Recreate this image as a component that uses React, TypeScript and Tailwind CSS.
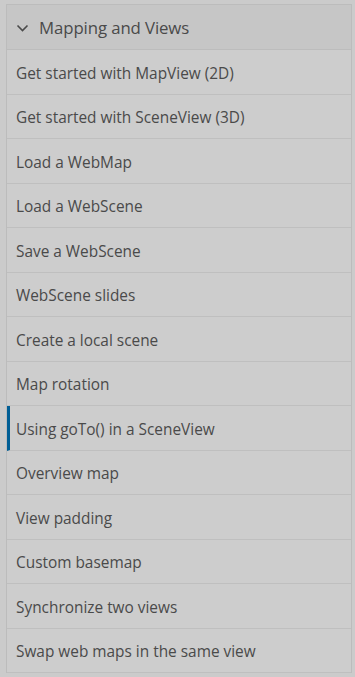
import React from "react";

const items = [
  "Get started with MapView (2D)",
  "Get started with SceneView (3D)",
  "Load a WebMap",
  "Load a WebScene",
  "Save a WebScene",
  "WebScene slides",
  "Create a local scene",
  "Map rotation",
  "Using goTo() in a SceneView",
  "Overview map",
  "View padding",
  "Custom basemap",
  "Synchronize two views",
  "Swap web maps in the same view",
];

export default function App() {
  return (
    <div
      className="w-[355px] h-[677px] overflow-hidden bg-[#cbcbcb] pt-[4px] pl-[6px] pr-[3px]"
      style={{ fontFamily: '"Open Sans", "Noto Sans", sans-serif' }}
    >
      <div className="border-l border-r border-t border-[#bcbcbc] bg-[#cdcdcd]">
        <div className="h-[45px] flex items-center bg-[#c6c6c6] border-b border-[#bcbcbc] pl-[9px] pt-[1px]">
          <svg width="13" height="9" viewBox="0 0 13 9" className="mr-[10px] mt-[2px]">
            <path d="M1.5 1.5 L6.5 6.5 L11.5 1.5" fill="none" stroke="#4a4a4a" strokeWidth="1.6" />
          </svg>
          <span className="text-[16.8px] text-[#4a4a4a] tracking-[-0.1px]">Mapping and Views</span>
        </div>
        {items.map((t, i) => (
          <div
            key={t}
            className={
              "h-[44.5px] flex items-center border-b border-[#bfbfbf] text-[15.4px] text-[#4a4a4a] pt-[3px] " +
              (i === 8 ? "pl-[6px] border-l-[3px] border-l-[#005e95]" : "pl-[9px]")
            }
          >
            {t}
          </div>
        ))}
      </div>
    </div>
  );
}
